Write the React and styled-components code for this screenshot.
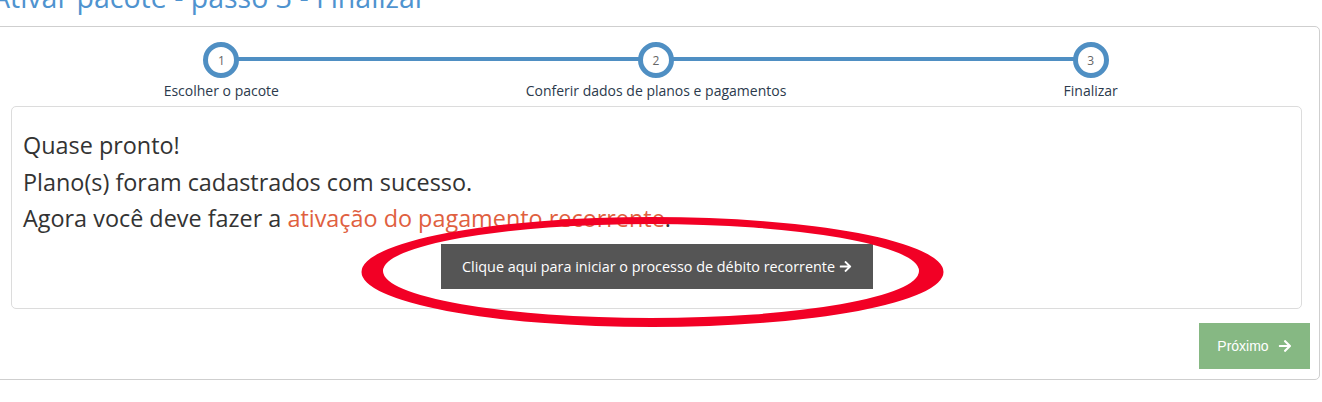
import React from 'react'
import styled, { createGlobalStyle } from 'styled-components'
import { FaArrowRight } from 'react-icons/fa'

const GlobalStyle = createGlobalStyle`
  html, body {
    margin: 0;
    padding: 0;
    background: #fff;
    overflow: hidden;
  }
  body {
    font-family: "Open Sans", "Liberation Sans", sans-serif;
    color: #333;
  }
`;

const Page = styled.div`
  position: relative;
  display: flow-root;
  width: 1322px;
  height: 402px;
`;

const Title = styled.h2`
  margin: -20px 0 0 -8px;
  font-size: 28.5px;
  line-height: 34px;
  font-weight: 400;
  color: #4f93cf;
  white-space: nowrap;
`;

const Panel = styled.div`
  margin: 12px 0 0 -6px;
  width: 1326px;
  box-sizing: border-box;
  border: 1px solid #cfcfcf;
  border-radius: 5px;
  padding: 15px 9px 10px 9px;
`;

const Stepper = styled.div`
  display: flex;
  margin-right: 2px;
`;

const Step = styled.div`
  flex: 1;
  display: flex;
  flex-direction: column;
  align-items: center;
`;

const Track = styled.div`
  position: relative;
  width: 100%;
  height: 36px;
  display: flex;
  justify-content: center;

  &::before {
    content: '';
    position: absolute;
    top: 15px;
    height: 4px;
    background: #4f8fc3;
    left: ${p => (p.$first ? '50%' : '0')};
    right: ${p => (p.$last ? '50%' : '0')};
  }
`;

const Circle = styled.div`
  position: relative;
  z-index: 1;
  width: 36px;
  height: 36px;
  box-sizing: border-box;
  border: 5px solid #4f8fc3;
  border-radius: 50%;
  background: #fff;
  display: flex;
  align-items: center;
  justify-content: center;
  font-size: 12px;
  color: #666;
`;

const StepLabel = styled.div`
  margin-top: 4px;
  font-size: 14px;
  line-height: 18px;
  color: #2b3a4c;
`;

const ContentBox = styled.div`
  margin: 6px 8px 0 7px;
  border: 1px solid #dcdcdc;
  border-radius: 5px;
  padding: 20px 10px 19px 11px;
`;

const Message = styled.p`
  margin: 0;
  font-size: 23.4px;
  line-height: 36.5px;
  color: #333;
`;

const Highlight = styled.span`
  color: #e0603f;
`;

const Center = styled.div`
  margin-top: 7px;
  text-align: center;
`;

const DarkButton = styled.button`
  height: 45px;
  padding: 0 21px;
  border: none;
  border-radius: 0;
  background: #555;
  color: #fff;
  font-family: "Open Sans", sans-serif;
  font-size: 14.4px;
  display: inline-flex;
  align-items: center;
  gap: 4px;
  cursor: pointer;

  svg {
    font-size: 13px;
  }
`;

const Footer = styled.div`
  display: flex;
  justify-content: flex-end;
  margin-top: 14px;
`;

const NextButton = styled.button`
  width: 111px;
  height: 46px;
  border: none;
  background: #86b883;
  color: #fff;
  font-family: "Liberation Sans", Arial, sans-serif;
  font-size: 14px;
  display: flex;
  align-items: center;
  justify-content: center;
  gap: 9px;
  cursor: pointer;

  svg {
    font-size: 14px;
  }
`;

const Annotation = styled.svg`
  position: absolute;
  left: 0;
  top: 0;
  pointer-events: none;
`;

const steps = [
  { n: 1, label: 'Escolher o pacote' },
  { n: 2, label: 'Conferir dados de planos e pagamentos' },
  { n: 3, label: 'Finalizar' },
];

// outer ring minus inner ring gives the uneven hand-drawn stroke
const ring =
  'M361.5 272 a291 55 0 1 0 582 0 a291 55 0 1 0 -582 0 Z ' +
  'M383 271 a268 47 0 1 0 536 0 a268 47 0 1 0 -536 0 Z';

const App = () => {
  return (
    <Page>
      <GlobalStyle />
      <Title>Ativar pacote - passo 3 - Finalizar</Title>
      <Panel>
        <Stepper>
          {steps.map((s, i) => (
            <Step key={s.n}>
              <Track $first={i === 0} $last={i === steps.length - 1}>
                <Circle>{s.n}</Circle>
              </Track>
              <StepLabel>{s.label}</StepLabel>
            </Step>
          ))}
        </Stepper>
        <ContentBox>
          <Message>Quase pronto!</Message>
          <Message>Plano(s) foram cadastrados com sucesso.</Message>
          <Message>
            Agora você deve fazer a <Highlight>ativação do pagamento recorrente</Highlight>.
          </Message>
          <Center>
            <DarkButton>
              Clique aqui para iniciar o processo de débito recorrente <FaArrowRight />
            </DarkButton>
          </Center>
        </ContentBox>
        <Footer>
          <NextButton>
            Próximo <FaArrowRight />
          </NextButton>
        </Footer>
      </Panel>
      <Annotation width="1322" height="402" viewBox="0 0 1322 402">
        <path d={ring} fill="#f20025" fillRule="evenodd" />
      </Annotation>
    </Page>
  )
}

export default App
